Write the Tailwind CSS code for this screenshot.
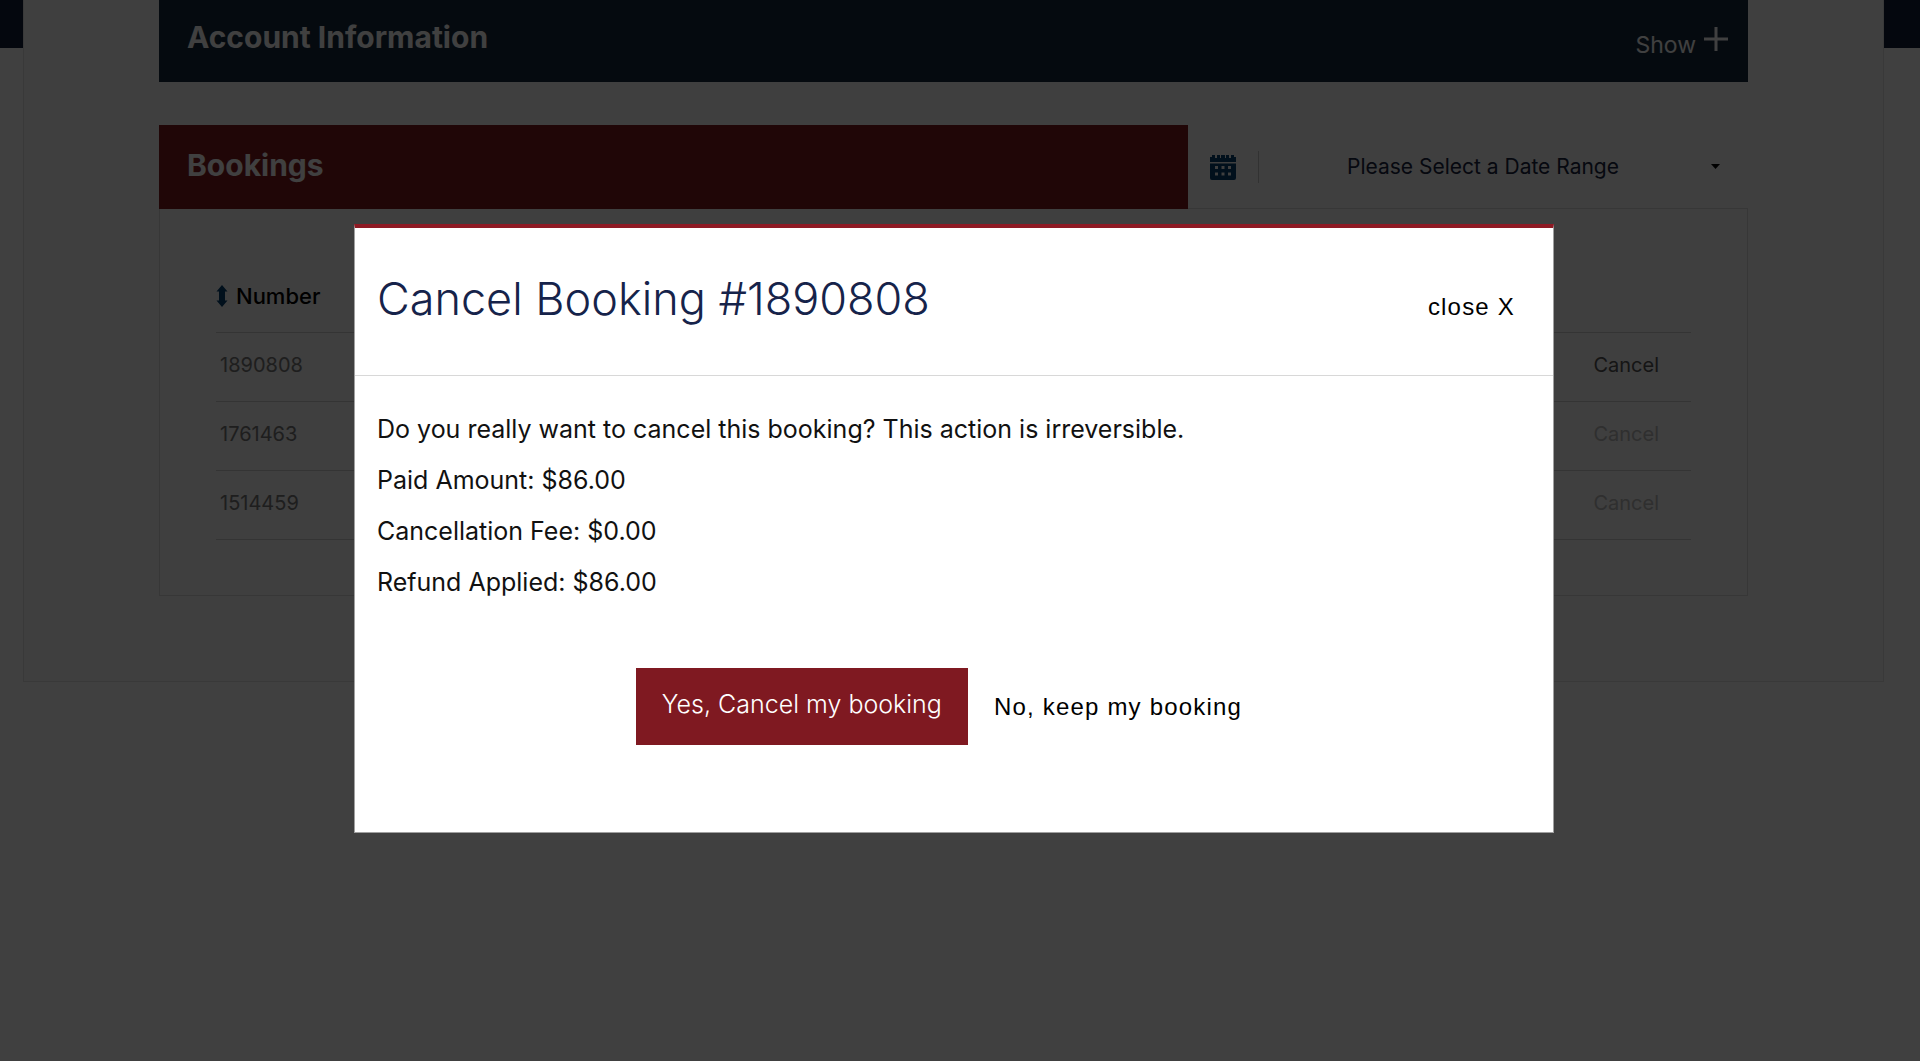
<!DOCTYPE html>
<html lang="en">
<head>
<meta charset="utf-8">
<meta name="viewport" content="width=device-width, initial-scale=1">
<title>Cancel Booking</title>
<script src="https://cdn.jsdelivr.net/npm/@tailwindcss/browser@4"></script>
</head>
<body class="min-h-screen bg-white font-['Inter',sans-serif] text-black">
  <header class="h-12 bg-[#121e38]"></header>

  <main class="-mt-12 mr-9 ml-[23px] border border-t-0 border-[#e2e2e2] bg-[#f9f9f9] px-[135px] pb-[85px]">
    <section class="flex h-[82px] items-center justify-between bg-[#17283c] pr-5 pl-7 text-white">
      <h2 class="pb-2 text-[30px] leading-10 font-bold">Account Information</h2>
      <button type="button" class="flex items-center gap-2 text-[23px] leading-8">
        <span class="pt-2">Show</span>
        <svg class="mb-1 size-6" viewBox="0 0 24 24" fill="none" stroke="currentColor" stroke-width="3" aria-hidden="true"><path d="M12 0v24M0 12h24"/></svg>
      </button>
    </section>

    <section class="mt-[43px]">
      <div class="flex h-[84px]">
        <h2 class="flex flex-1 items-center bg-[#801b1f] pb-1 pl-7 text-[30px] leading-10 font-bold text-white">Bookings</h2>
        <div class="flex w-[560px] items-center border-b border-[#dcdcdc] pr-7 pl-[22px]">
          <svg class="h-[26px] w-[26px] text-[#044070]" viewBox="0 0 26 26" fill="currentColor" aria-hidden="true">
            <path d="M0 3h2V1h3v3h2V1h3v3h1V1h4v3h1V1h3v3h2V1h3v2h2v5H0z"/>
            <path fill-rule="evenodd" d="M0 9.500h26V24a2 2 0 0 1-2 2H2a2 2 0 0 1-2-2zM5 12v3h3v-3zm6.500 0v3h3v-3zm6.500 0v3h3v-3zM5 18.500v3h3v-3zm6.500 0v3h3v-3zm6.500 0v3h3v-3z"/>
          </svg>
          <span class="ml-[22px] h-8 w-px bg-[#c8c8c8]"></span>
          <select aria-label="Date range" class="h-12 min-w-0 flex-1 appearance-none bg-transparent pr-1 text-center text-[21px] text-[#1a2440] [text-align-last:center]">
            <option>Please Select a Date Range</option>
          </select>
          <svg class="h-[5px] w-[9px]" viewBox="0 0 9 5" aria-hidden="true"><path d="M0 0h9L4.500 5z"/></svg>
        </div>
      </div>

      <div class="border border-t-0 border-[#dcdcdc] px-14 pt-14 pb-[55px]">
        <table class="w-full border-collapse text-left text-[20px] leading-7">
          <thead>
            <tr class="h-[67px] border-b border-[#d0d0d0]">
              <th scope="col" class="pb-1 text-[22px] font-medium">
                <span class="flex items-center gap-2">
                  <svg class="h-[22px] w-3 text-[#044070]" viewBox="0 0 12 22" fill="currentColor" aria-hidden="true"><path d="M6 0l5.500 6.500H9v9h2.500L6 22 .5 15.500H3v-9H.5z"/></svg>
                  Number
                </span>
              </th>
              <td></td>
            </tr>
          </thead>
          <tbody class="text-[#777]">
            <tr class="h-[69px] border-b border-[#d0d0d0]">
              <td class="pb-1 pl-1">1890808</td>
              <td class="pr-8 pb-1 text-right"><button type="button" class="text-[#555]">Cancel</button></td>
            </tr>
            <tr class="h-[69px] border-b border-[#d0d0d0]">
              <td class="pb-1 pl-1">1761463</td>
              <td class="pr-8 pb-1 text-right"><button type="button" disabled class="text-[#bbb]">Cancel</button></td>
            </tr>
            <tr class="h-[69px] border-b border-[#d0d0d0]">
              <td class="pb-1 pl-1">1514459</td>
              <td class="pr-8 pb-1 text-right"><button type="button" disabled class="text-[#bbb]">Cancel</button></td>
            </tr>
          </tbody>
        </table>
      </div>
    </section>
  </main>

  <div class="fixed inset-0 flex items-start justify-center overflow-auto bg-black/75 pt-56 pr-3">
    <div role="dialog" aria-modal="true" aria-labelledby="dialog-title" class="w-full max-w-[1200px] border border-t-4 border-[#a0a0a0] border-t-[#8e1a24] bg-white">
      <div class="flex items-center justify-between border-b border-[#d8d8d8] pt-[42px] pr-[38px] pb-[47px] pl-[22px]">
        <h1 id="dialog-title" class="text-[45px] leading-[58px] font-light text-[#16234a]">Cancel Booking #1890808</h1>
        <button type="button" class="pt-4 font-['Liberation_Sans',sans-serif] text-2xl tracking-wider">close X</button>
      </div>
      <div class="px-[22px] pt-7 pb-[87px]">
        <div class="text-[25px] leading-[51px] text-[#111]">
          <p>Do you really want to cancel this booking? This action is irreversible.</p>
          <p>Paid Amount: $86.00</p>
          <p>Cancellation Fee: $0.00</p>
          <p>Refund Applied: $86.00</p>
        </div>
        <div class="mt-[60px] flex items-center justify-center pr-1">
          <button type="button" class="h-[77px] bg-[#7f1921] px-[26px] pb-1 text-[25px] font-light text-white">Yes, Cancel my booking</button>
          <button type="button" class="px-[26px] font-['Liberation_Sans',sans-serif] text-2xl tracking-wider">No, keep my booking</button>
        </div>
      </div>
    </div>
  </div>
</body>
</html>
